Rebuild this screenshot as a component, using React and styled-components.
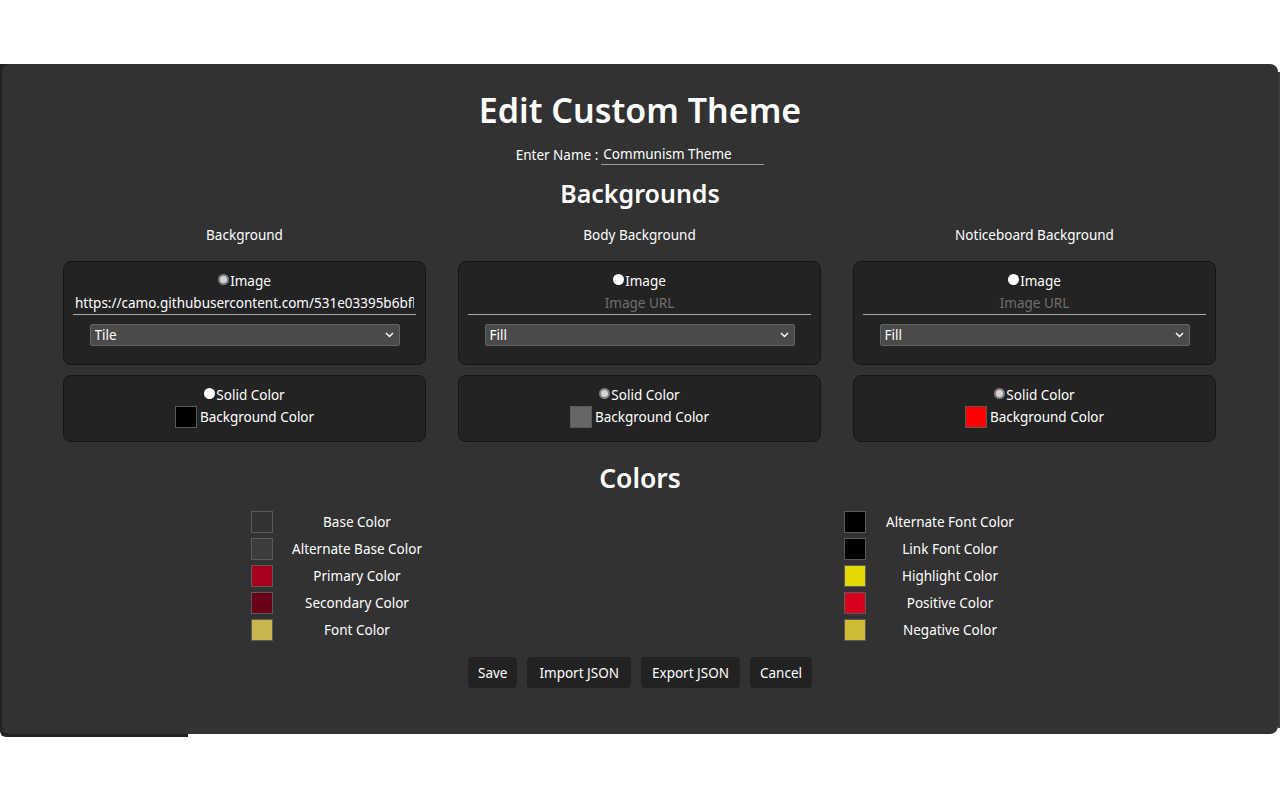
import React from 'react';
import styled, { createGlobalStyle } from 'styled-components';

const Global = createGlobalStyle`
  html, body { margin: 0; padding: 0; background: #ffffff; }
  body { font-family: "Noto Sans", "Open Sans", sans-serif; -webkit-font-smoothing: antialiased; }
  * { box-sizing: border-box; }
`;

const Page = styled.div`
  padding-top: 64px;
  height: 800px;
`;

const Stage = styled.div`
  position: relative;
  &::before {
    content: "";
    position: absolute;
    left: 0;
    top: 0;
    width: 188px;
    height: 673px;
    background: #222226;
    border-radius: 0 0 0 6px;
  }
  &::after {
    content: "";
    position: absolute;
    right: 0;
    top: 8px;
    width: 2px;
    height: 656px;
    background: #3b3b3b;
  }
`;

const Modal = styled.div`
  position: relative;
  z-index: 1;
  margin: 0 2px 0 2px;
  height: 670px;
  background: #323232;
  border-radius: 8px;
  padding: 22px 61px 0 61px;
  color: #ffffff;
  display: flex;
  flex-direction: column;
  align-items: center;
`;

const Title = styled.h1`
  margin: 0;
  font-size: 34px;
  line-height: 48px;
  font-weight: 600;
`;

const NameRow = styled.div`
  margin-top: 10px;
  display: flex;
  align-items: flex-end;
  font-size: 13.5px;
  line-height: 20px;
`;

const NameInput = styled.input`
  margin-left: 3px;
  width: 163px;
  height: 21px;
  background: transparent;
  border: none;
  border-bottom: 1px solid #9a9a9a;
  color: #ffffff;
  font: inherit;
  padding: 0 2px;
  outline: none;
`;

const Heading = styled.h2`
  margin: ${p => p.$mt}px 0 0;
  font-size: ${p => p.$size}px;
  line-height: 36px;
  font-weight: 600;
`;

const Columns = styled.div`
  margin-top: 14px;
  margin-right: 1px;
  width: 1153px;
  display: grid;
  grid-template-columns: repeat(3, 1fr);
  column-gap: 32px;
`;

const Column = styled.div`
  display: flex;
  flex-direction: column;
  align-items: stretch;
`;

const ColLabel = styled.div`
  text-align: center;
  font-size: 13.5px;
  line-height: 20px;
  margin-bottom: 16px;
`;

const Card = styled.div`
  background: #232323;
  border: 1px solid #161616;
  border-radius: 8px;
  padding: 9px 9px ${p => p.$pb}px;
  margin-top: ${p => p.$mt || 0}px;
  display: flex;
  flex-direction: column;
  align-items: center;
  font-size: 13.5px;
`;

const RadioRow = styled.label`
  display: flex;
  align-items: center;
  height: 20px;
  line-height: 20px;
`;

const RadioDot = styled.span`
  width: 11px;
  height: 11px;
  border-radius: 50%;
  margin-top: -3px;
  margin-right: 1px;
  background: ${p => (p.$checked ? '#d4d4d4' : '#ffffff')};
  border: ${p => (p.$checked ? '2.5px solid #808080' : '0')};
`;

const UrlInput = styled.input`
  width: 100%;
  height: 24px;
  background: transparent;
  border: none;
  border-bottom: 1.5px solid #a8a8a8;
  color: #ffffff;
  font: inherit;
  font-size: 13.5px;
  text-align: center;
  padding: 0 2px;
  outline: none;
  &::placeholder { color: #6f6f6f; }
`;

const SelectWrap = styled.div`
  position: relative;
  margin-top: 9px;
  width: 310px;
  height: 22px;
`;

const Select = styled.select`
  appearance: none;
  -webkit-appearance: none;
  width: 100%;
  height: 100%;
  background: #4a4a4a;
  border: 1px solid #646464;
  border-radius: 2px;
  color: #ffffff;
  font: inherit;
  font-size: 13.5px;
  padding: 0 4px;
  outline: none;
`;

const Chevron = styled.svg`
  position: absolute;
  right: 6px;
  top: 8px;
  pointer-events: none;
`;

const ColorRow = styled.div`
  display: flex;
  align-items: center;
  gap: 3px;
  height: 24px;
`;

const Swatch = styled.span`
  width: ${p => p.$size}px;
  height: ${p => p.$size}px;
  background: ${p => p.$color};
  border: 1px solid #5a5a5a;
  flex: none;
`;

const ColorsGrid = styled.div`
  margin-top: 15px;
  width: 783px;
  margin-left: 5px;
  display: flex;
  justify-content: space-between;
`;

const ColorList = styled.div`
  display: flex;
  flex-direction: column;
  gap: 5px;
`;

const ColorItem = styled.div`
  display: flex;
  align-items: center;
  height: 22px;
`;

const ColorLabel = styled.span`
  width: 168px;
  text-align: center;
  font-size: 13.5px;
  line-height: 22px;
`;

const Buttons = styled.div`
  margin-top: 16px;
  display: flex;
  gap: 10px;
`;

const Button = styled.button`
  height: 31px;
  padding: 0 ${p => p.$px || 10}px;
  background: #222222;
  border: none;
  border-radius: 4px;
  color: #ffffff;
  font: inherit;
  font-size: 13.5px;
  cursor: pointer;
`;

const columns = [
  { label: 'Background', imageChecked: true, url: 'https://camo.githubusercontent.com/531e03395b6bfb3ad2f7a5c1b0e6d9', mode: 'Tile', color: '#000000' },
  { label: 'Body Background', imageChecked: false, url: '', mode: 'Fill', color: '#666666' },
  { label: 'Noticeboard Background', imageChecked: false, url: '', mode: 'Fill', color: '#ff0000' },
];

const leftColors = [
  ['Base Color', '#333333'],
  ['Alternate Base Color', '#3c3c3c'],
  ['Primary Color', '#a6001f'],
  ['Secondary Color', '#6a0018'],
  ['Font Color', '#c8b54c'],
];

const rightColors = [
  ['Alternate Font Color', '#000000'],
  ['Link Font Color', '#000000'],
  ['Highlight Color', '#e5d900'],
  ['Positive Color', '#d8001c'],
  ['Negative Color', '#cfbc35'],
];

function Radio({ checked, children }) {
  return (
    <RadioRow>
      <RadioDot $checked={checked} />
      {children}
    </RadioRow>
  );
}

export default function App() {
  return (
    <Page>
      <Global />
      <Stage>
        <Modal>
          <Title>Edit Custom Theme</Title>
          <NameRow>
            Enter Name :
            <NameInput defaultValue="Communism Theme" />
          </NameRow>
          <Heading $mt={10} $size={25}>Backgrounds</Heading>
          <Columns>
            {columns.map(c => (
              <Column key={c.label}>
                <ColLabel>{c.label}</ColLabel>
                <Card $pb={18}>
                  <Radio checked={c.imageChecked}>Image</Radio>
                  <UrlInput defaultValue={c.url} placeholder="Image URL" />
                  <SelectWrap>
                    <Select defaultValue={c.mode}>
                      <option>Tile</option>
                      <option>Fill</option>
                      <option>Stretch</option>
                    </Select>
                    <Chevron width="9" height="6" viewBox="0 0 9 6">
                      <path d="M1 1 L4.5 4.5 L8 1" fill="none" stroke="#ffffff" strokeWidth="1.4" />
                    </Chevron>
                  </SelectWrap>
                </Card>
                <Card $mt={10} $pb={12}>
                  <Radio checked={!c.imageChecked}>Solid Color</Radio>
                  <ColorRow>
                    <Swatch $size={22} $color={c.color} />
                    Background Color
                  </ColorRow>
                </Card>
              </Column>
            ))}
          </Columns>
          <Heading $mt={18} $size={26.5}>Colors</Heading>
          <ColorsGrid>
            {[leftColors, rightColors].map((list, i) => (
              <ColorList key={i}>
                {list.map(([name, color]) => (
                  <ColorItem key={name}>
                    <Swatch $size={22} $color={color} />
                    <ColorLabel>{name}</ColorLabel>
                  </ColorItem>
                ))}
              </ColorList>
            ))}
          </ColorsGrid>
          <Buttons>
            <Button>Save</Button>
            <Button $px={12}>Import JSON</Button>
            <Button $px={11}>Export JSON</Button>
            <Button>Cancel</Button>
          </Buttons>
        </Modal>
      </Stage>
    </Page>
  );
}
